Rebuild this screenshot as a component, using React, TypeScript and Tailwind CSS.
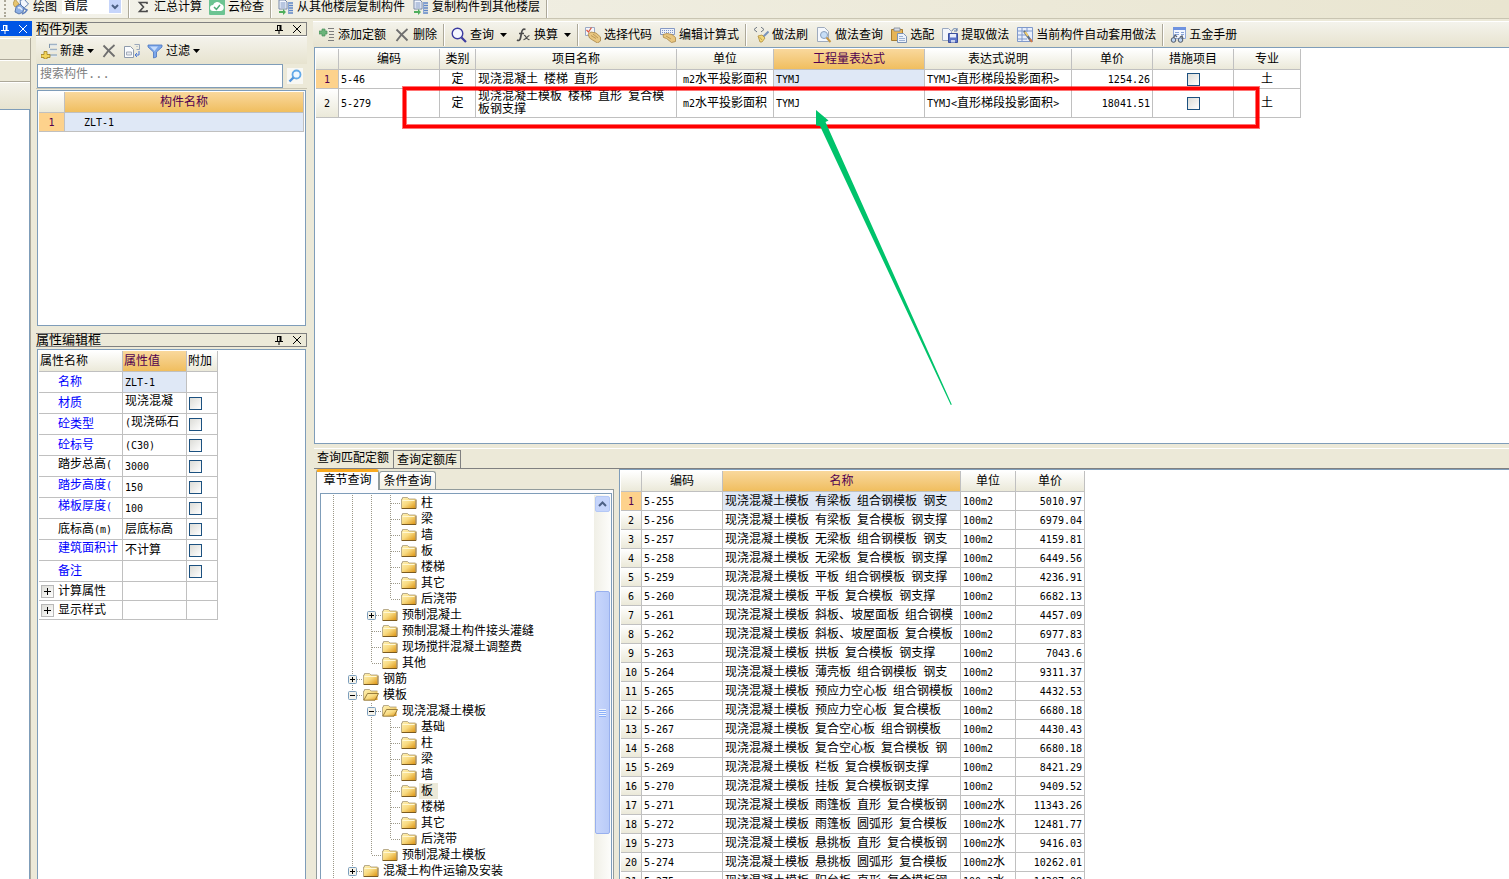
import { useState, type ReactNode } from 'react'
import clsx from 'clsx'

type Quota = { code: string; kind: string; name: string; unit: string; expr: string; note: string; price: string; major: string }
type Prop = { name: string; value: string; blue?: boolean; check?: boolean; nameTop?: boolean; valueTop?: boolean }
type Node = { label: string; level: number; last?: boolean; mark?: '+' | '-'; open?: boolean }

const quotas: Quota[] = [
  { code: '5-46', kind: '定', name: '现浇混凝土 楼梯 直形', unit: 'm2水平投影面积', expr: 'TYMJ', note: 'TYMJ<直形梯段投影面积>', price: '1254.26', major: '土' },
  { code: '5-279', kind: '定', name: '现浇混凝土模板 楼梯 直形 复合模板钢支撑', unit: 'm2水平投影面积', expr: 'TYMJ', note: 'TYMJ<直形梯段投影面积>', price: '18041.51', major: '土' },
]

const props: Prop[] = [
  { name: '名称', value: 'ZLT-1', blue: true },
  { name: '材质', value: '现浇混凝', blue: true, check: true, valueTop: true },
  { name: '砼类型', value: '(现浇砾石', blue: true, check: true, valueTop: true },
  { name: '砼标号', value: '(C30)', blue: true, check: true },
  { name: '踏步总高(', value: '3000', check: true, nameTop: true },
  { name: '踏步高度(', value: '150', blue: true, check: true, nameTop: true },
  { name: '梯板厚度(', value: '100', blue: true, check: true, nameTop: true },
  { name: '底标高(m)', value: '层底标高', check: true },
  { name: '建筑面积计', value: '不计算', blue: true, check: true, nameTop: true },
  { name: '备注', value: '', blue: true, check: true },
]

const nodes: Node[] = [
  { label: '柱', level: 4 },
  { label: '梁', level: 4 },
  { label: '墙', level: 4 },
  { label: '板', level: 4 },
  { label: '楼梯', level: 4 },
  { label: '其它', level: 4 },
  { label: '后浇带', level: 4, last: true },
  { label: '预制混凝土', level: 3, mark: '+' },
  { label: '预制混凝土构件接头灌缝', level: 3 },
  { label: '现场搅拌混凝土调整费', level: 3 },
  { label: '其他', level: 3, last: true },
  { label: '钢筋', level: 2, mark: '+' },
  { label: '模板', level: 2, mark: '-', open: true },
  { label: '现浇混凝土模板', level: 3, mark: '-', open: true },
  { label: '基础', level: 4 },
  { label: '柱', level: 4 },
  { label: '梁', level: 4 },
  { label: '墙', level: 4 },
  { label: '板', level: 4 },
  { label: '楼梯', level: 4 },
  { label: '其它', level: 4 },
  { label: '后浇带', level: 4, last: true },
  { label: '预制混凝土模板', level: 3, last: true },
  { label: '混凝土构件运输及安装', level: 2, mark: '+' },
]

const library = [
  ['5-255', '现浇混凝土模板 有梁板 组合钢模板 钢支', '100m2', '5010.97'],
  ['5-256', '现浇混凝土模板 有梁板 复合模板 钢支撑', '100m2', '6979.04'],
  ['5-257', '现浇混凝土模板 无梁板 组合钢模板 钢支', '100m2', '4159.81'],
  ['5-258', '现浇混凝土模板 无梁板 复合模板 钢支撑', '100m2', '6449.56'],
  ['5-259', '现浇混凝土模板 平板 组合钢模板 钢支撑', '100m2', '4236.91'],
  ['5-260', '现浇混凝土模板 平板 复合模板 钢支撑', '100m2', '6682.13'],
  ['5-261', '现浇混凝土模板 斜板、坡屋面板 组合钢模', '100m2', '4457.09'],
  ['5-262', '现浇混凝土模板 斜板、坡屋面板 复合模板', '100m2', '6977.83'],
  ['5-263', '现浇混凝土模板 拱板 复合模板 钢支撑', '100m2', '7043.6'],
  ['5-264', '现浇混凝土模板 薄壳板 组合钢模板 钢支', '100m2', '9311.37'],
  ['5-265', '现浇混凝土模板 预应力空心板 组合钢模板', '100m2', '4432.53'],
  ['5-266', '现浇混凝土模板 预应力空心板 复合模板', '100m2', '6680.18'],
  ['5-267', '现浇混凝土模板 复合空心板 组合钢模板', '100m2', '4430.43'],
  ['5-268', '现浇混凝土模板 复合空心板 复合模板 钢', '100m2', '6680.18'],
  ['5-269', '现浇混凝土模板 栏板 复合模板钢支撑', '100m2', '8421.29'],
  ['5-270', '现浇混凝土模板 挂板 复合模板钢支撑', '100m2', '9409.52'],
  ['5-271', '现浇混凝土模板 雨篷板 直形 复合模板钢', '100m2水', '11343.26'],
  ['5-272', '现浇混凝土模板 雨篷板 圆弧形 复合模板', '100m2水', '12481.77'],
  ['5-273', '现浇混凝土模板 悬挑板 直形 复合模板钢', '100m2水', '9416.03'],
  ['5-274', '现浇混凝土模板 悬挑板 圆弧形 复合模板', '100m2水', '10262.01'],
  ['5-275', '现浇混凝土模板 阳台板 直形 复合模板钢', '100m2水', '14387.08'],
]

// Latin runs are half as wide as the Chinese glyphs
function Mixed({ text }: { text: string }) {
  return (
    <>
      {text.split(/([\x20-\x7e]+)/).filter(Boolean).map((part, i) =>
        /^[\x20-\x7e]/.test(part) ? <span key={i} className="text-[10px] leading-none">{part}</span> : part
      )}
    </>
  )
}

function Icon({ children }: { children: ReactNode }) {
  return <svg viewBox="0 0 16 16" className="w-4 h-4 shrink-0" fill="none" aria-hidden="true">{children}</svg>
}

const PaintIcon = () => (
  <Icon>
    <path d="M2 0l4 5-4 3-2-3z" fill="#e7c56f" stroke="#a98a3f" strokeWidth=".7" />
    <path d="M7 1.500l4-1.500 4.500 5-4 3.500-3.500-1z" fill="#f2f6fd" stroke="#5f7fae" />
    <path d="M3 8l4-3 4 4-1 4-4 2-4-2z" fill="#8fb0e4" stroke="#4466a0" strokeWidth=".8" />
    <path d="M5 9c2-1 3 0 4 2" stroke="#e3edfb" strokeWidth="1.500" />
    <path d="M11 9.500l3 1.500-2 2.500-3 1.500" stroke="#5d7fbd" strokeWidth="1.500" />
  </Icon>
)
const SumIcon = () => <Icon><path d="M12 5V3.500H4.500L8.500 8 4.500 12.500H12V11" stroke="#4a4a4a" strokeWidth="1.600" /></Icon>
const CloudIcon = () => (
  <Icon>
    <rect width="16" height="16" rx="1" fill="#6cc492" />
    <path d="M4 12a3 3 0 010-6 4.500 4.500 0 018-1 3.600 3.600 0 010 7z" fill="#fff" />
    <path d="M5 8l2.400 2.400L11 6" stroke="#4fae78" strokeWidth="1.500" />
  </Icon>
)
const FloorCopyIcon = () => (
  <Icon>
    <path d="M1 1h6l2 2v7H1z" fill="#f4f8ff" stroke="#7688a8" />
    <path d="M2.500 4h5M2.500 6h5M2.500 8h5" stroke="#7b93c0" />
    <path d="M10 4h5M10 6.500h5M10 9h5M10 11.500h5M10 14h5" stroke="#5f86c6" strokeWidth="1.500" />
    <path d="M10.500 3v12" stroke="#89a5d6" />
    <path d="M1 12h4v-2l3 3-3 3v-2H1z" fill="#4fae5c" />
  </Icon>
)
const NewIcon = () => (
  <Icon>
    <path d="M8 1.500h8M9 6.500h7M9 12h7" stroke="#9fb2c6" strokeWidth="1.600" />
    <path d="M8 3h8M9 8h7M9 13.500h7" stroke="#e3eaf1" />
    <path d="M8.500 1v4" stroke="#8095ad" />
    <path d="M3 8.500h3v3h3v3H6v1.500H3v-1.500H0v-3h3z" fill="#f3d45b" stroke="#9d7d1e" strokeWidth=".8" />
  </Icon>
)
const DeleteIcon = () => (
  <Icon>
    <path d="M2.500 2.500C6 6 10 10 13.500 13.500" stroke="#6f6f6f" strokeWidth="1.800" />
    <path d="M13.500 2C9 5.500 6 9 2.500 14" stroke="#6f6f6f" strokeWidth="1.800" />
  </Icon>
)
const CopyIcon = () => (
  <Icon>
    <path d="M.5 3.500h6l3 3v8h-9z" fill="#fbfcfe" stroke="#8e9aac" />
    <path d="M2.500 9h5v3h-5z" fill="#e6e9ef" stroke="#a4adba" />
    <path d="M10.500 1.500h5v5h-3M12.500 3.500h1" stroke="#9aa7ba" />
    <path d="M15 8v4h-4m2-2l-2 2 2 2" stroke="#4a77d4" />
  </Icon>
)
const FilterIcon = () => (
  <Icon>
    <path d="M1 2h14v2l-5.500 5v5L6.500 15V9L1 4z" fill="#7ca7ea" stroke="#4a73bf" strokeWidth=".8" />
    <path d="M3 3.500h8L7.500 8z" fill="#c6dcfb" />
  </Icon>
)
const SearchIcon = () => (
  <Icon>
    <rect width="16" height="16" fill="#f8f8f4" />
    <circle cx="9.500" cy="6.500" r="4" fill="#f0f8ff" stroke="#62a9e8" strokeWidth="1.800" />
    <path d="M6.500 9.500l-4 4" stroke="#4f94dc" strokeWidth="2.400" />
  </Icon>
)
const AddIcon = () => (
  <Icon>
    <path d="M3 2h3v2h2v3H6v2H3V7H0V4h3z" fill="#6bb47a" stroke="#4b8f5c" strokeWidth=".7" />
    <path d="M9 1.500h6M10 4.500h5M10 7.500h5M10 10.500h5M9 13.500h6" stroke="#7d7d7d" />
  </Icon>
)
const QueryIcon = () => (
  <Icon>
    <circle cx="6.500" cy="6.500" r="5.300" fill="#f5f7ff" stroke="#3c3ca0" strokeWidth="1.400" />
    <path d="M10.500 10.500l4.500 4.500" stroke="#3c3ca0" strokeWidth="2.200" />
  </Icon>
)
const FxIcon = () => (
  <Icon>
    <path d="M10.500 2.500C8 1.500 7 3 6.500 6L5.500 11c-.4 2.500-2 3-3.500 2M4 6.500h5" stroke="#4c4c4c" strokeWidth="1.700" />
    <path d="M9 8.500c2-1 2 5 5.500 4M14.500 8.500c-2 0-3.500 4.500-6 4" stroke="#4c4c4c" strokeWidth="1.200" />
  </Icon>
)
const PickCodeIcon = () => (
  <Icon>
    <path d="M.5.500h9v8h-9z" fill="#f5f6fb" stroke="#9ba8c4" />
    <path d="M1.500 3l2 2 3-4.500" stroke="#dd5a42" strokeWidth="1.300" />
    <path d="M3 7l3-2 5 1 4.500 4v4l-3 2-5-3-3-2z" fill="#e8c680" stroke="#a98545" strokeWidth=".8" />
    <path d="M6 8.500l5 3M8 7l5 4" stroke="#a98545" strokeWidth=".7" />
  </Icon>
)
const EditCalcIcon = () => (
  <Icon>
    <path d="M.5 1.500h14v6H.5z" fill="#eef2fb" stroke="#8599c4" />
    <path d="M2 3.500h11M2 5.500h11" stroke="#7d93c6" strokeDasharray="1 1" />
    <path d="M3 7.500l4-1 5 1 3.500 3v4l-4 1-5-4-3-1z" fill="#e8c680" stroke="#a98545" strokeWidth=".8" />
    <path d="M6 9l5 3" stroke="#a98545" strokeWidth=".7" />
  </Icon>
)
const BrushIcon = () => (
  <Icon>
    <path d="M4 0L1 2.500 4 5M8 0l3 2.500L8 5" stroke="#6b7480" />
    <path d="M15.500 4.500l-5 5" stroke="#7a94bb" strokeWidth="2" />
    <path d="M5 9l4-1 3 3-3 4-2 0z" fill="#f2d678" stroke="#b08d37" strokeWidth=".8" />
    <path d="M6.500 10l2.500 3" stroke="#b08d37" strokeWidth=".7" />
  </Icon>
)
const MethodQueryIcon = () => (
  <Icon>
    <path d="M1.500.500h7l4 4v10h-11z" fill="#f5f8fd" stroke="#9fabbd" />
    <circle cx="8" cy="8" r="3.500" fill="#c7def7" stroke="#8aa0bd" />
    <path d="M10.500 10.500l4 4.500" stroke="#c79745" strokeWidth="2" />
  </Icon>
)
const PasteIcon = () => (
  <Icon>
    <path d="M.5 2.500h11v11H.5z" fill="#e6b455" stroke="#a67c31" />
    <path d="M3 1h6v3H3z" fill="#d8dde6" stroke="#7c8695" strokeWidth=".8" />
    <path d="M6.500 6.500h6l3 3v6h-9z" fill="#edf3fc" stroke="#7d93b5" />
    <path d="M8 9.500h4M8 11.500h6M8 13.500h6" stroke="#9cb1d2" />
  </Icon>
)
const ExtractIcon = () => (
  <Icon>
    <path d="M.5 1.500h6l3 3v9h-9z" fill="#f3f6fc" stroke="#9aa8c0" />
    <path d="M6.500 6.500h9v9h-9z" fill="#5b73c8" stroke="#3b4f9b" />
    <path d="M8 7h6v3.500H8z" fill="#e9eefb" />
    <path d="M9 13h4v2.500H9z" fill="#c9d3ee" />
    <path d="M10 4c1-3 4-3 5-1m0-2v3h-3" stroke="#5b78a8" />
  </Icon>
)
const AutoIcon = () => (
  <Icon>
    <path d="M.5.500h15v14H.5z" fill="#e8effc" stroke="#7f99cb" />
    <path d="M1 4h14M1 8h8M1 12h9M5 1v13M10 1v4" stroke="#7f99cb" />
    <path d="M7 4l7 10" stroke="#5e6f86" strokeWidth="2.200" />
    <path d="M8 5l3 4" stroke="#f3cd69" strokeWidth="1.800" />
    <path d="M13 12l2 3" stroke="#d37842" strokeWidth="2" />
  </Icon>
)
const ManualIcon = () => (
  <Icon>
    <path d="M3.500.500h12v11h-12z" fill="#f3f7ff" stroke="#8fa8da" />
    <path d="M3 0h13v3H3z" fill="#6f93e0" />
    <path d="M5 5.500h4M11 5.500h3M5 7.500h4M11 7.500h3" stroke="#88a3d6" />
    <path d="M3 12l2-4 2 2M13 12l-1-3-2 1" stroke="#5a6473" strokeWidth="1.300" />
    <circle cx="3.500" cy="13" r="2.300" fill="#bcd3f2" stroke="#4f5967" />
    <circle cx="10.500" cy="13" r="2.300" fill="#bcd3f2" stroke="#4f5967" />
  </Icon>
)

function FolderIcon({ open }: { open?: boolean }) {
  return (
    <Icon>
      <defs>
        <linearGradient id="gold" x1="0" y1="0" x2="1" y2="1">
          <stop offset="0" stopColor="#fff3b8" />
          <stop offset=".5" stopColor="#f8da80" />
          <stop offset="1" stopColor="#dd9413" />
        </linearGradient>
      </defs>
      <path d="M.5 13V4h1V2.500h5L8 4h6.500v9z" fill="url(#gold)" />
      <path d="M.5 13V4h1V2.500h5L8 4h6.500" stroke="#a89a78" strokeWidth=".8" />
      {open ? (
        <path d="M.8 13.200L4.500 6.500h11L12 13.200z" fill="url(#gold)" stroke="#8f7334" strokeWidth=".9" />
      ) : (
        <>
          <path d="M1.500 5.500h12" stroke="#fff8d4" />
          <path d="M.5 13.500h14.500V4.500" stroke="#7a5a20" />
        </>
      )}
    </Icon>
  )
}

function Caret() {
  return <svg viewBox="0 0 7 4" className="w-[7px] h-1 shrink-0" aria-hidden="true"><path d="M0 0h7L3.500 4z" fill="#000" /></svg>
}

function ToolButton({ icon, label, menu }: { icon: ReactNode; label?: string; menu?: 'tight' | 'wide' }) {
  return (
    <button className="flex items-center gap-[3px] shrink-0 whitespace-nowrap">
      {icon}
      {label}
      {menu && <span className={clsx('flex justify-end', menu === 'wide' ? 'w-[10px]' : 'w-[7px]')}><Caret /></span>}
    </button>
  )
}

function Separator() {
  return <div className="w-[2px] h-[22px] -mx-[2px] shrink-0 bg-[#aca899] border-r border-white" />
}

function PinClose({ light }: { light?: boolean }) {
  return (
    <div className={clsx('flex items-center gap-2', light ? 'text-white' : 'text-black')}>
      <button aria-label="固定">
        <svg viewBox="0 0 10 10" className="w-[10px] h-[10px]" fill="none" stroke="currentColor"><path d="M3.500 1v5M3 1.500h4M1 6.500h8M5 7v3" /><path d="M6.500 1v5" strokeWidth="2" /></svg>
      </button>
      <button aria-label="关闭">
        <svg viewBox="0 0 10 10" className="w-[10px] h-[10px]" fill="none" stroke="currentColor"><path d="M1 1l8 8M9 1L1 9" /></svg>
      </button>
    </div>
  )
}

function PanelTitle({ title }: { title: string }) {
  return (
    <div className="h-[14px] shrink-0 flex items-center justify-between pr-1 border border-l-0 border-[#808080]">
      <h2 className="text-[13px] leading-[14px] whitespace-nowrap">{title}</h2>
      <PinClose />
    </div>
  )
}

function Check({ label }: { label: string }) {
  return (
    <input type="checkbox" aria-label={label}
      className="appearance-none block w-[13px] h-[13px] border border-[#1c5180] bg-linear-to-br from-[#dcdcd7] to-white checked:bg-none checked:bg-[#21a121]" />
  )
}

function Th({ children, active, left }: { children?: ReactNode; active?: boolean; left?: boolean }) {
  return (
    <th className={clsx('h-[21px] p-0 font-normal border-r border-b border-[#c0c0c0] bg-linear-to-b whitespace-nowrap',
      left ? 'text-left pl-px' : 'text-center',
      active ? 'from-[#f9d89c] to-[#f0be5e] text-[#500050]' : 'from-white to-[#ebe9d9]')}>
      {children}
    </th>
  )
}

function RowNo({ n, active }: { n: number; active?: boolean }) {
  return (
    <th className={clsx('p-0 font-normal border-r border-b border-[#c0c0c0]',
      active ? 'bg-[#fdd28c] text-[#500050]' : 'bg-linear-to-b from-white to-[#ebe9d9]')}>
      <Mixed text={String(n)} />
    </th>
  )
}

function Td({ children, className }: { children?: ReactNode; className?: string }) {
  return <td className={clsx('p-0 px-[2px] border-r border-b border-[#c0c0c0] overflow-hidden', className)}>{children}</td>
}

function TopBar() {
  return (
    <header className="h-[19px] shrink-0 flex items-end overflow-hidden border-b border-[#c9c5b2] bg-linear-to-r from-[#f3f2ea] to-[#e9e5d0]">
      <div className="h-[23px] flex items-center gap-2 pl-1">
        <div className="h-5 border-l-2 border-dotted border-[#aca899] mr-[-1px]" />
        <button className="flex items-center gap-1 mr-[-3px]"><PaintIcon />绘图</button>
        <div className="relative">
          <select aria-label="楼层" className="appearance-none block w-[60px] h-[15px] pl-[2px] bg-white leading-[15px]">
            <option>首层</option>
          </select>
          <span className="absolute right-px top-px w-3 h-[13px] flex items-center justify-center bg-[#c6d5fb] pointer-events-none">
            <svg viewBox="0 0 8 6" className="w-2 h-[6px]" fill="none"><path d="M1 1l3 3 3-3" stroke="#4d6185" strokeWidth="2" /></svg>
          </span>
        </div>
        <Separator />
        {/* Calculation tools sit closer together than the floor tools */}
        <div className="flex items-center gap-[7px] -ml-px">
          <ToolButton icon={<SumIcon />} label="汇总计算" />
          <ToolButton icon={<CloudIcon />} label="云检查" />
        </div>
        <Separator />
        <ToolButton icon={<FloorCopyIcon />} label="从其他楼层复制构件" />
        <ToolButton icon={<FloorCopyIcon />} label="复制构件到其他楼层" />
        <Separator />
      </div>
    </header>
  )
}

function CollapsedStrip() {
  return (
    <div className="w-8 shrink-0 flex flex-col pt-[2px]">
      <div className="h-[15px] shrink-0 flex items-center justify-end pr-1 bg-[#0055e5]"><PinClose light /></div>
      <div className="w-[31px] mt-[2px] flex-1 flex flex-col border-r border-[#aca899]">
        <div className="h-[22px] border-t border-b border-t-white border-b-[#aca899]" />
        <div className="h-[22px] border-t border-b border-t-white border-b-[#aca899]" />
        <div className="h-[27px] border-t border-white bg-linear-to-b from-[#f3f2ea] to-[#e7e3cf]" />
        <div className="flex-1 bg-white border-t border-r border-[#7f9db9]" />
      </div>
    </div>
  )
}

function ComponentList() {
  return (
    <section className="flex flex-col shrink-0">
      <PanelTitle title="构件列表" />
      <div className="h-7 flex items-center gap-[7px] pl-[5px] border-t border-white bg-linear-to-b from-[#f4f3ec] to-[#e7e3cf]">
        <ToolButton icon={<NewIcon />} label="新建" menu="tight" />
        <ToolButton icon={<DeleteIcon />} />
        <ToolButton icon={<CopyIcon />} />
        <ToolButton icon={<FilterIcon />} label="过滤" menu="tight" />
      </div>
      <div className="h-[25px] flex items-start pl-px border-b border-[#c9c5b2]">
        <input aria-label="搜索构件" placeholder="搜索构件..." className="flex-1 min-w-0 h-6 pl-[2px] pb-1 bg-white border border-[#7f9db9] placeholder:text-[#808080] outline-none" />
        <button aria-label="搜索" className="w-6 h-6 flex items-center justify-center"><SearchIcon /></button>
      </div>
      <div className="h-[236px] mt-px mx-px p-px bg-white border border-[#7f9db9]">
        <table className="w-full table-fixed border-separate border-spacing-0">
          <colgroup><col className="w-[26px]" /><col /></colgroup>
          <thead><tr><Th /><Th active>构件名称</Th></tr></thead>
          <tbody>
            <tr className="h-[19px]">
              <RowNo n={1} active />
              <Td className="bg-[#dfe8f6] pl-[19px]"><Mixed text="ZLT-1" /></Td>
            </tr>
          </tbody>
        </table>
      </div>
    </section>
  )
}

function PropertyEditor() {
  return (
    <section className="flex-1 min-h-0 flex flex-col mt-[7px]">
      <PanelTitle title="属性编辑框" />
      <div className="flex-1 min-h-0 mt-[2px] mx-px p-px bg-white border border-b-0 border-[#7f9db9] overflow-hidden">
        <table className="w-[179px] table-fixed border-separate border-spacing-0 whitespace-nowrap">
          <colgroup><col className="w-[84px]" /><col className="w-[64px]" /><col className="w-[31px]" /></colgroup>
          <thead><tr><Th left>属性名称</Th><Th left active>属性值</Th><Th left>附加</Th></tr></thead>
          <tbody>
            {props.map((p, i) => (
              <tr key={p.name} className="h-[21px]">
                <Td className={clsx('pl-[19px]', p.blue && 'text-[#0000ff]', p.nameTop && 'align-top')}><Mixed text={p.name} /></Td>
                <Td className={clsx(i === 0 && 'bg-[#dfe8f6]', p.valueTop && 'align-top')}><Mixed text={p.value} /></Td>
                <Td>{p.check && <Check label={p.name} />}</Td>
              </tr>
            ))}
            {['计算属性', '显示样式'].map((name) => (
              <tr key={name} className="h-[19px]">
                <Td>
                  <div className="flex items-center gap-1">
                    <button aria-label={`展开${name}`} className="w-[13px] h-[13px] flex items-center justify-center border border-[#b8b8b8] bg-linear-to-br from-[#dcdcd7] to-white">
                      <svg viewBox="0 0 7 7" className="w-[7px] h-[7px]"><path d="M0 3.500h7M3.500 0v7" stroke="#000" /></svg>
                    </button>
                    {name}
                  </div>
                </Td>
                <Td />
                <Td />
              </tr>
            ))}
          </tbody>
        </table>
      </div>
    </section>
  )
}

function QuotaToolbar() {
  return (
    <div className="h-[26px] shrink-0 mt-[2px] flex items-center gap-2 pl-[6px] border-t border-white bg-linear-to-b from-[#f4f3ec] to-[#e7e3cf] overflow-hidden">
      <ToolButton icon={<AddIcon />} label="添加定额" />
      <ToolButton icon={<DeleteIcon />} label="删除" />
      <Separator />
      <ToolButton icon={<QueryIcon />} label="查询" menu="wide" />
      <ToolButton icon={<FxIcon />} label="换算" menu="wide" />
      <Separator />
      <ToolButton icon={<PickCodeIcon />} label="选择代码" />
      <ToolButton icon={<EditCalcIcon />} label="编辑计算式" />
      <Separator />
      <ToolButton icon={<BrushIcon />} label="做法刷" />
      <ToolButton icon={<MethodQueryIcon />} label="做法查询" />
      <ToolButton icon={<PasteIcon />} label="选配" />
      <ToolButton icon={<ExtractIcon />} label="提取做法" />
      <ToolButton icon={<AutoIcon />} label="当前构件自动套用做法" />
      <Separator />
      <ToolButton icon={<ManualIcon />} label="五金手册" />
    </div>
  )
}

function QuotaGrid() {
  return (
    <div className="relative h-[397px] shrink-0 ml-px p-px bg-white border border-r-0 border-[#7f9db9]">
      <table className="w-[985px] table-fixed border-separate border-spacing-0">
        <colgroup>
          <col className="w-[23px]" /><col className="w-[101px]" /><col className="w-[36px]" /><col className="w-[201px]" /><col className="w-[97px]" />
          <col className="w-[151px]" /><col className="w-[147px]" /><col className="w-[81px]" /><col className="w-[81px]" /><col className="w-[67px]" />
        </colgroup>
        <thead>
          <tr>
            <Th /><Th>编码</Th><Th>类别</Th><Th>项目名称</Th><Th>单位</Th><Th active>工程量表达式</Th><Th>表达式说明</Th><Th>单价</Th><Th>措施项目</Th><Th>专业</Th>
          </tr>
        </thead>
        <tbody>
          {quotas.map((q, i) => (
            <tr key={q.code} className={i === 0 ? 'h-[19px]' : 'h-[29px]'}>
              <RowNo n={i + 1} active={i === 0} />
              <Td><Mixed text={q.code} /></Td>
              <Td className="text-center">{q.kind}</Td>
              <Td className="leading-[13px]"><Mixed text={q.name} /></Td>
              <Td className="text-center whitespace-nowrap"><Mixed text={q.unit} /></Td>
              <Td className={i === 0 ? 'bg-[#dfe8f6]' : ''}><Mixed text={q.expr} /></Td>
              <Td className="whitespace-nowrap"><Mixed text={q.note} /></Td>
              <Td className="text-right"><Mixed text={q.price} /></Td>
              <Td><div className="flex justify-center"><Check label="措施项目" /></div></Td>
              <Td className="text-center">{q.major}</Td>
            </tr>
          ))}
        </tbody>
      </table>

      {/* Callout over the second row */}
      <div className="absolute left-[88px] top-[39px] w-[856px] h-[41px] border-[3px] border-[#ff0000] shadow-[0_0_0_1px_#ff00008c,inset_0_0_0_1px_#ff00008c] pointer-events-none" />
      <svg viewBox="0 0 136 296" className="absolute left-[501px] top-[62px] w-[136px] h-[296px] pointer-events-none" aria-hidden="true">
        <path d="M0 0L12.500 10.500 9.500 12 135.800 294.500 134.800 295 4 16 0 15.500z" fill="#00c36b" />
      </svg>
    </div>
  )
}

function TreeRow({ node, selected, onSelect }: { node: Node; selected: boolean; onSelect: () => void }) {
  return (
    <li className="h-4 flex items-center">
      {Array.from({ length: node.level }, (_, col) => {
        const branch = col === node.level - 1
        return (
          <svg key={col} viewBox="0 0 19 16" className="w-[19px] h-4 shrink-0" fill="none" aria-hidden="true">
            <path d={branch && node.last ? 'M9.500 0v8' : 'M9.500 0v16'} stroke="#9c9888" strokeDasharray="1 1" />
            {branch && <path d="M10 8.500h9" stroke="#9c9888" strokeDasharray="1 1" />}
            {branch && node.mark && (
              <>
                <rect x="5.500" y="4.500" width="8" height="8" rx="1" fill="#f4f2ea" stroke="#7b9ebd" />
                <path d={node.mark === '+' ? 'M7 8.500h5M9.500 6v5' : 'M7 8.500h5'} stroke="#000" />
              </>
            )}
          </svg>
        )
      })}
      <span className="pl-px flex items-center gap-[2px]">
        <FolderIcon open={node.open} />
        <button onClick={onSelect} className={clsx('h-4 leading-4 px-[2px] whitespace-nowrap', selected && 'bg-[#ece9d8] pr-[5px]')}>{node.label}</button>
      </span>
    </li>
  )
}

function ChapterTree() {
  const [selected, setSelected] = useState(18)

  return (
    <div className="w-[300px] shrink-0 flex flex-col pl-[2px]">
      <div className="h-5 shrink-0 flex items-end">
        <button className="relative z-10 w-[63px] h-[21px] -mb-px pb-1 shrink-0 rounded-t-[3px] border-x border-t-[3px] border-x-[#919b9c] border-t-[#f9a91f] bg-[#fcfcfe] leading-4">章节查询</button>
        <button className="w-[57px] h-[18px] shrink-0 rounded-t-[3px] border border-b-0 border-[#919b9c] bg-linear-to-b from-white to-[#f0eee2] leading-4">条件查询</button>
      </div>
      <div className="flex-1 min-h-0 flex pt-[3px] pl-[3px] pr-px border border-b-0 border-[#919b9c] bg-[#fcfcfe]">
        <div className="flex-1 min-w-0 flex pt-px border border-b-0 border-[#7f9db9] bg-white overflow-hidden">
          <ul className="flex-1 min-w-0 pl-[3px]">
            {nodes.map((node, i) => (
              <TreeRow key={i} node={node} selected={i === selected} onSelect={() => setSelected(i)} />
            ))}
          </ul>
          <div className="w-[17px] shrink-0 flex flex-col items-center bg-linear-to-r from-[#f0efe6] to-[#fdfdfb]">
            <button aria-label="向上滚动" className="w-[15px] h-4 mt-px shrink-0 flex items-center justify-center rounded-[2px] border border-[#b4c8f6] bg-[#c6d5fb]">
              <svg viewBox="0 0 9 6" className="w-[9px] h-[6px]" fill="none"><path d="M1 5l3.500-3.500L8 5" stroke="#4d6185" strokeWidth="2" /></svg>
            </button>
            <div className="w-[15px] h-[243px] mt-[79px] shrink-0 flex items-center justify-center rounded-[2px] border border-[#98b0ee] bg-linear-to-r from-[#c8d6fb] to-[#b9cbf8]">
              <div className="w-[7px] h-2 bg-[repeating-linear-gradient(#eef4fe_0_1px,#8cb0f8_1px_2px)]" />
            </div>
          </div>
        </div>
      </div>
    </div>
  )
}

function LibraryGrid() {
  return (
    <div className="flex-1 min-w-0 ml-[5px] p-px border-l border-t border-[#7f9db9] bg-white overflow-hidden">
      <table className="w-[464px] table-fixed border-separate border-spacing-0 whitespace-nowrap">
        <colgroup><col className="w-[21px]" /><col className="w-[81px]" /><col className="w-[238px]" /><col className="w-[55px]" /><col className="w-[69px]" /></colgroup>
        <thead><tr><Th /><Th>编码</Th><Th active>名称</Th><Th>单位</Th><Th>单价</Th></tr></thead>
        <tbody>
          {library.map(([code, name, unit, price], i) => (
            <tr key={code} className="h-[19px]">
              <RowNo n={i + 1} active={i === 0} />
              <Td><Mixed text={code} /></Td>
              <Td className={i === 0 ? 'bg-[#dfe8f6]' : ''}><Mixed text={name} /></Td>
              <Td><Mixed text={unit} /></Td>
              <Td className="text-right"><Mixed text={price} /></Td>
            </tr>
          ))}
        </tbody>
      </table>
    </div>
  )
}

export default function App() {
  return (
    <div className="h-screen flex flex-col overflow-hidden bg-[#ece9d8] text-black text-[12px] leading-4 font-['DejaVu_Sans_Mono','Noto_Sans_CJK_SC',monospace]">
      <TopBar />
      <div className="flex-1 min-h-0 flex">
        <CollapsedStrip />
        <aside className="w-[271px] shrink-0 ml-1 pt-[3px] flex flex-col">
          <ComponentList />
          <PropertyEditor />
        </aside>
        <main className="flex-1 min-w-0 ml-[6px] flex flex-col">
          <QuotaToolbar />
          <QuotaGrid />
          {/* Lower query tabs */}
          <div className="h-[25px] shrink-0 pt-1 ml-px border-b border-[#808080]">
            <div className="h-5 flex items-end border-t border-white">
              <button className="w-[79px] h-[18px] pl-[3px] pb-[2px] shrink-0 flex items-center">查询匹配定额</button>
              <button className="w-[68px] h-[18px] shrink-0 flex items-center justify-center border border-b-0 border-[#808080]">查询定额库</button>
            </div>
          </div>
          <div className="flex-1 min-h-0 flex ml-px">
            <ChapterTree />
            <LibraryGrid />
          </div>
        </main>
      </div>
    </div>
  )
}
